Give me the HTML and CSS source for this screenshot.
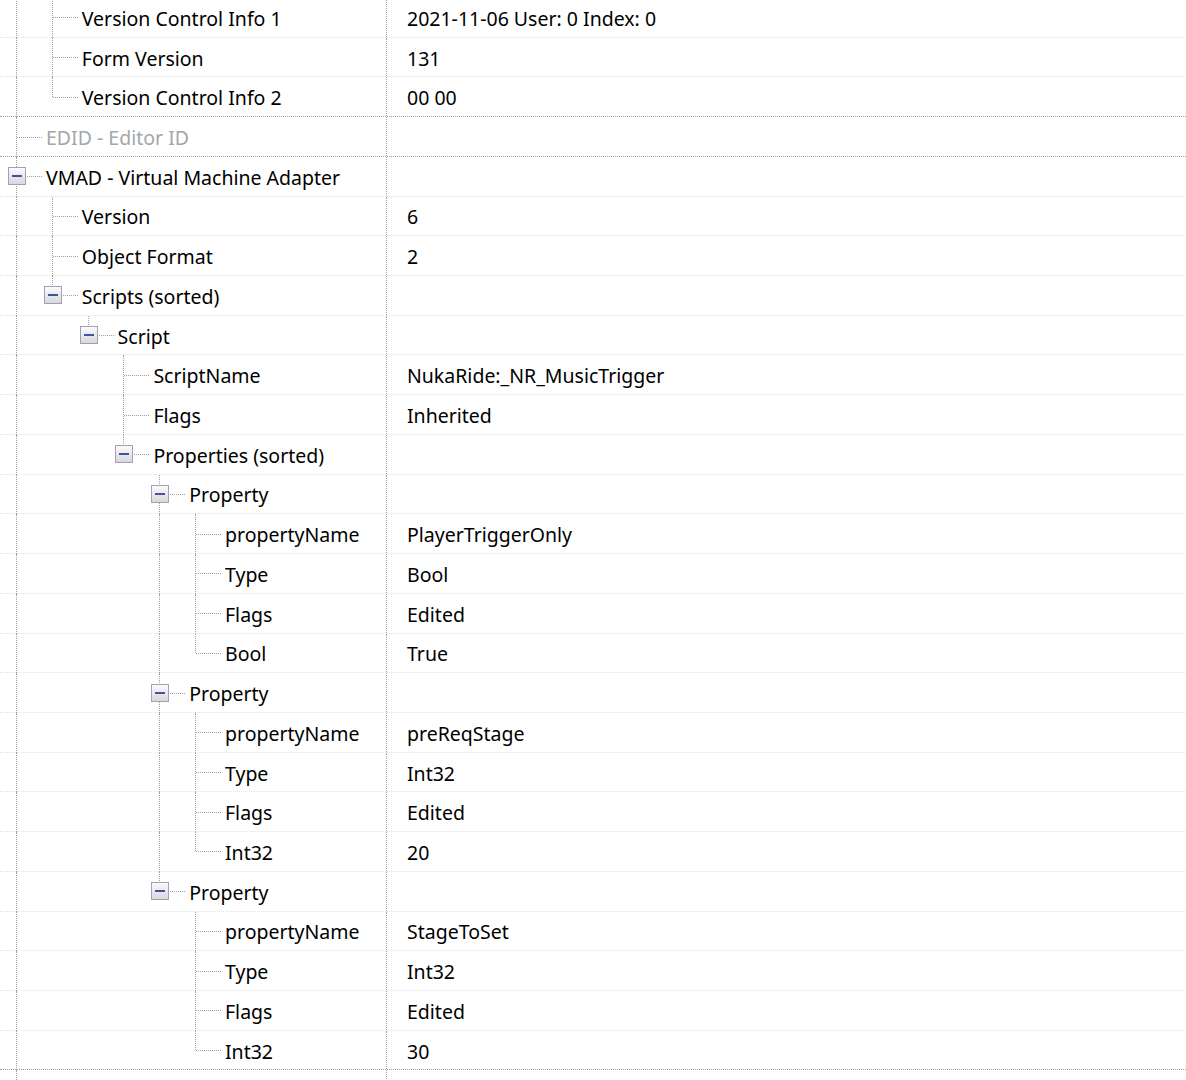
FILE: index.html
```html
<!DOCTYPE html>
<html lang="en">
<head>
  <meta charset="UTF-8">
  <title>Record View</title>
  <link rel="stylesheet" href="styles.css">
</head>
<body>
  <div id="albero">
    <div class="riga">
      <div class="nome"><span class="g v"></span><span class="c mid"></span><span class="testo">Version Control Info 1</span></div>
      <div class="valore">2021-11-06 User: 0 Index: 0</div>
    </div>
    <div class="riga">
      <div class="nome"><span class="g v"></span><span class="c mid"></span><span class="testo">Form Version</span></div>
      <div class="valore">131</div>
    </div>
    <div class="riga sep">
      <div class="nome"><span class="g v"></span><span class="c last"></span><span class="testo">Version Control Info 2</span></div>
      <div class="valore">00 00</div>
    </div>
    <div class="riga sep">
      <div class="nome"><span class="c mid"></span><span class="testo vuoto">EDID - Editor ID</span></div>
      <div class="valore"></div>
    </div>
    <div class="riga">
      <div class="nome"><span class="c mid"><span class="toggle"></span></span><span class="testo">VMAD - Virtual Machine Adapter</span></div>
      <div class="valore"></div>
    </div>
    <div class="riga">
      <div class="nome"><span class="g v"></span><span class="c mid"></span><span class="testo">Version</span></div>
      <div class="valore">6</div>
    </div>
    <div class="riga">
      <div class="nome"><span class="g v"></span><span class="c mid"></span><span class="testo">Object Format</span></div>
      <div class="valore">2</div>
    </div>
    <div class="riga">
      <div class="nome"><span class="g v"></span><span class="c last"><span class="toggle"></span></span><span class="testo">Scripts (sorted)</span></div>
      <div class="valore"></div>
    </div>
    <div class="riga">
      <div class="nome"><span class="g v"></span><span class="g"></span><span class="c last"><span class="toggle"></span></span><span class="testo">Script</span></div>
      <div class="valore"></div>
    </div>
    <div class="riga">
      <div class="nome"><span class="g v"></span><span class="g"></span><span class="g"></span><span class="c mid"></span><span class="testo">ScriptName</span></div>
      <div class="valore">NukaRide:_NR_MusicTrigger</div>
    </div>
    <div class="riga">
      <div class="nome"><span class="g v"></span><span class="g"></span><span class="g"></span><span class="c mid"></span><span class="testo">Flags</span></div>
      <div class="valore">Inherited</div>
    </div>
    <div class="riga">
      <div class="nome"><span class="g v"></span><span class="g"></span><span class="g"></span><span class="c last"><span class="toggle"></span></span><span class="testo">Properties (sorted)</span></div>
      <div class="valore"></div>
    </div>

    <!-- proprieta 1 -->
    <div class="riga">
      <div class="nome"><span class="g v"></span><span class="g"></span><span class="g"></span><span class="g"></span><span class="c mid"><span class="toggle"></span></span><span class="testo">Property</span></div>
      <div class="valore"></div>
    </div>
    <div class="riga">
      <div class="nome"><span class="g v"></span><span class="g"></span><span class="g"></span><span class="g"></span><span class="g v"></span><span class="c mid"></span><span class="testo">propertyName</span></div>
      <div class="valore">PlayerTriggerOnly</div>
    </div>
    <div class="riga">
      <div class="nome"><span class="g v"></span><span class="g"></span><span class="g"></span><span class="g"></span><span class="g v"></span><span class="c mid"></span><span class="testo">Type</span></div>
      <div class="valore">Bool</div>
    </div>
    <div class="riga">
      <div class="nome"><span class="g v"></span><span class="g"></span><span class="g"></span><span class="g"></span><span class="g v"></span><span class="c mid"></span><span class="testo">Flags</span></div>
      <div class="valore">Edited</div>
    </div>
    <div class="riga">
      <div class="nome"><span class="g v"></span><span class="g"></span><span class="g"></span><span class="g"></span><span class="g v"></span><span class="c last"></span><span class="testo">Bool</span></div>
      <div class="valore">True</div>
    </div>

    <!-- proprieta 2 -->
    <div class="riga">
      <div class="nome"><span class="g v"></span><span class="g"></span><span class="g"></span><span class="g"></span><span class="c mid"><span class="toggle"></span></span><span class="testo">Property</span></div>
      <div class="valore"></div>
    </div>
    <div class="riga">
      <div class="nome"><span class="g v"></span><span class="g"></span><span class="g"></span><span class="g"></span><span class="g v"></span><span class="c mid"></span><span class="testo">propertyName</span></div>
      <div class="valore">preReqStage</div>
    </div>
    <div class="riga">
      <div class="nome"><span class="g v"></span><span class="g"></span><span class="g"></span><span class="g"></span><span class="g v"></span><span class="c mid"></span><span class="testo">Type</span></div>
      <div class="valore">Int32</div>
    </div>
    <div class="riga">
      <div class="nome"><span class="g v"></span><span class="g"></span><span class="g"></span><span class="g"></span><span class="g v"></span><span class="c mid"></span><span class="testo">Flags</span></div>
      <div class="valore">Edited</div>
    </div>
    <div class="riga">
      <div class="nome"><span class="g v"></span><span class="g"></span><span class="g"></span><span class="g"></span><span class="g v"></span><span class="c last"></span><span class="testo">Int32</span></div>
      <div class="valore">20</div>
    </div>

    <!-- proprieta 3 -->
    <div class="riga">
      <div class="nome"><span class="g v"></span><span class="g"></span><span class="g"></span><span class="g"></span><span class="c last"><span class="toggle"></span></span><span class="testo">Property</span></div>
      <div class="valore"></div>
    </div>
    <div class="riga">
      <div class="nome"><span class="g v"></span><span class="g"></span><span class="g"></span><span class="g"></span><span class="g"></span><span class="c mid"></span><span class="testo">propertyName</span></div>
      <div class="valore">StageToSet</div>
    </div>
    <div class="riga">
      <div class="nome"><span class="g v"></span><span class="g"></span><span class="g"></span><span class="g"></span><span class="g"></span><span class="c mid"></span><span class="testo">Type</span></div>
      <div class="valore">Int32</div>
    </div>
    <div class="riga">
      <div class="nome"><span class="g v"></span><span class="g"></span><span class="g"></span><span class="g"></span><span class="g"></span><span class="c mid"></span><span class="testo">Flags</span></div>
      <div class="valore">Edited</div>
    </div>
    <div class="riga sep">
      <div class="nome"><span class="g v"></span><span class="g"></span><span class="g"></span><span class="g"></span><span class="g"></span><span class="c last"></span><span class="testo">Int32</span></div>
      <div class="valore">30</div>
    </div>

    <div class="riga">
      <div class="nome"><span class="g v"></span></div>
      <div class="valore"></div>
    </div>
  </div>
</body>
</html>
```

FILE: styles.css
```css
html, body {
  margin: 0;
  padding: 0;
  background: white;
  overflow: hidden;
  font-family: "Noto Sans", "Open Sans", sans-serif;
  font-size: 19.5px;
  color: black;
}

#albero {
  display: flex;
  flex-direction: column;
  margin-top: -2px;
}

.riga {
  display: flex;
  height: 39.73px;
  flex: none;
  box-sizing: border-box;
  border-bottom: 1px dotted #e3e3e3;
}

.riga.sep {
  border-bottom-color: #a0a0a0;
}

.nome {
  width: 387px;
  flex: none;
  display: flex;
  align-items: stretch;
  box-sizing: border-box;
  border-right: 1px dotted #a0a0a0;
}

.valore {
  flex: 1;
  display: flex;
  align-items: center;
  padding-left: 20px;
  padding-top: 2px;
  white-space: nowrap;
}

.testo {
  display: flex;
  align-items: center;
  padding-left: 2px;
  padding-top: 2px;
  white-space: nowrap;
}

.testo.vuoto {
  color: #a6a6a6;
}

/* linee dell'albero */
.g {
  width: 35.8px;
  flex: none;
  position: relative;
}

.g.v::before {
  content: '';
  position: absolute;
  left: 16px;
  top: 0;
  bottom: -1px;
  border-left: 1px dotted #a0a0a0;
}

.c {
  width: 44px;
  flex: none;
  position: relative;
}

.c::before {
  content: '';
  position: absolute;
  left: 16px;
  top: 0;
  border-left: 1px dotted #a0a0a0;
}

.c.mid::before { bottom: -1px; }
.c.last::before { height: 50%; }

.c::after {
  content: '';
  position: absolute;
  left: 17px;
  right: 2px;
  top: 50%;
  border-top: 1px dotted #a0a0a0;
}

.toggle {
  position: absolute;
  left: 8px;
  top: 50%;
  width: 18px;
  height: 18px;
  margin-top: -9px;
  box-sizing: border-box;
  border: 1px solid #a99cbb;
  background: linear-gradient(#fbfbfb, #e9e9e9 50%, #d9d9d9);
  z-index: 2;
}

.toggle::after {
  content: '';
  position: absolute;
  left: 3px;
  right: 3px;
  top: 7px;
  height: 2px;
  background: #3e53a6;
}
```
